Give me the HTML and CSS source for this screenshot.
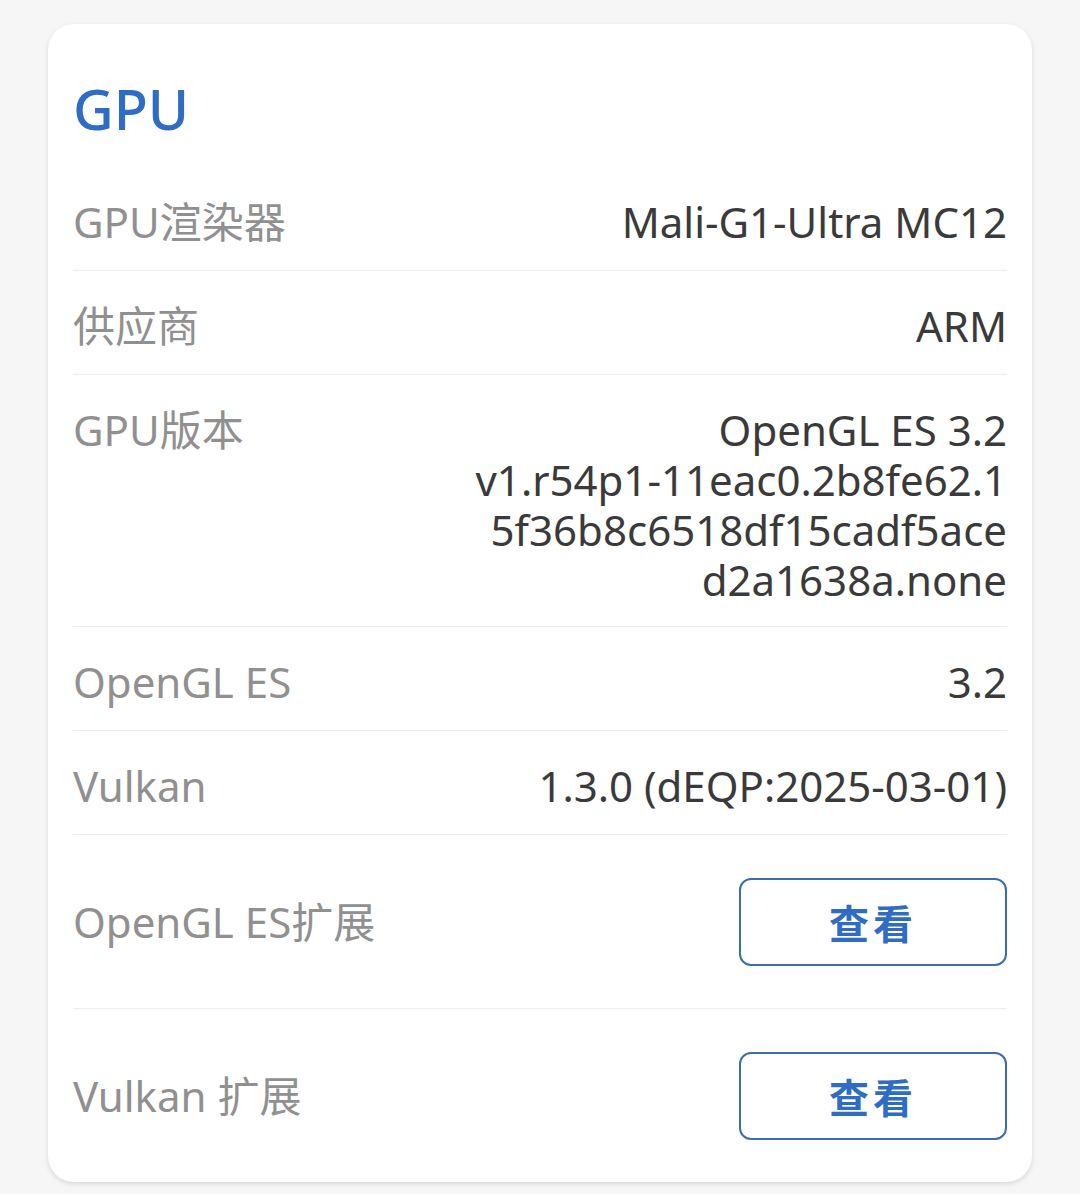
FILE: index.html
```html
<!DOCTYPE html>
<html lang="zh-CN">
<head>
    <meta charset="UTF-8">
    <meta name="viewport" content="width=device-width, initial-scale=1.0">
    <title>GPU</title>
    <link rel="stylesheet" href="styles.css">
</head>
<body>
    <div class="card">
        <h1 class="card-title">GPU</h1>
        <div class="info-row">
            <span class="label">GPU渲染器</span>
            <span class="value">Mali-G1-Ultra MC12</span>
        </div>
        <div class="info-row">
            <span class="label">供应商</span>
            <span class="value">ARM</span>
        </div>
        <div class="info-row multi">
            <span class="label">GPU版本</span>
            <span class="value">OpenGL ES 3.2<br>v1.r54p1-11eac0.2b8fe62.1<br>5f36b8c6518df15cadf5ace<br>d2a1638a.none</span>
        </div>
        <div class="info-row">
            <span class="label">OpenGL ES</span>
            <span class="value">3.2</span>
        </div>
        <div class="info-row">
            <span class="label">Vulkan</span>
            <span class="value">1.3.0 (dEQP:2025-03-01)</span>
        </div>
        <div class="info-row action">
            <span class="label">OpenGL ES扩展</span>
            <button class="view-btn">查看</button>
        </div>
        <div class="info-row action">
            <span class="label">Vulkan 扩展</span>
            <button class="view-btn">查看</button>
        </div>
    </div>
</body>
</html>
```

FILE: styles.css
```css
body {
    font-family: "Noto Sans", "Noto Sans CJK SC", sans-serif;
    background-color: #f6f6f6;
    margin: 0;
    padding: 24px 48px 14px;
}
.card {
    background: #fff;
    border-radius: 26px;
    padding: 0 25px;
    box-shadow: 0 2px 5px rgba(0, 0, 0, 0.12);
}
.card-title {
    margin: 0;
    padding: 56px 0 31px;
    font-size: 56px;
    line-height: 56px;
    font-weight: 500;
    color: #2f6cc3;
}
.info-row {
    display: flex;
    justify-content: space-between;
    align-items: flex-start;
    padding: 30px 0 23px;
    border-bottom: 1px solid #ececec;
    font-size: 42px;
    line-height: 50px;
}
.info-row.multi {
    padding-bottom: 21px;
}
.info-row.action {
    align-items: center;
    padding: 43px 0 42px;
}
.info-row:last-child {
    border-bottom: none;
}
.label {
    color: #909090;
}
.value {
    color: #3a3a3a;
    text-align: right;
}
.view-btn {
    width: 268px;
    height: 88px;
    background: #fff;
    border: 2.5px solid #3b6db3;
    border-radius: 12px;
    font-family: "Noto Sans CJK SC", sans-serif;
    font-size: 40px;
    font-weight: 700;
    letter-spacing: 4px;
    color: #2f6cc3;
    padding: 0;
}
```
